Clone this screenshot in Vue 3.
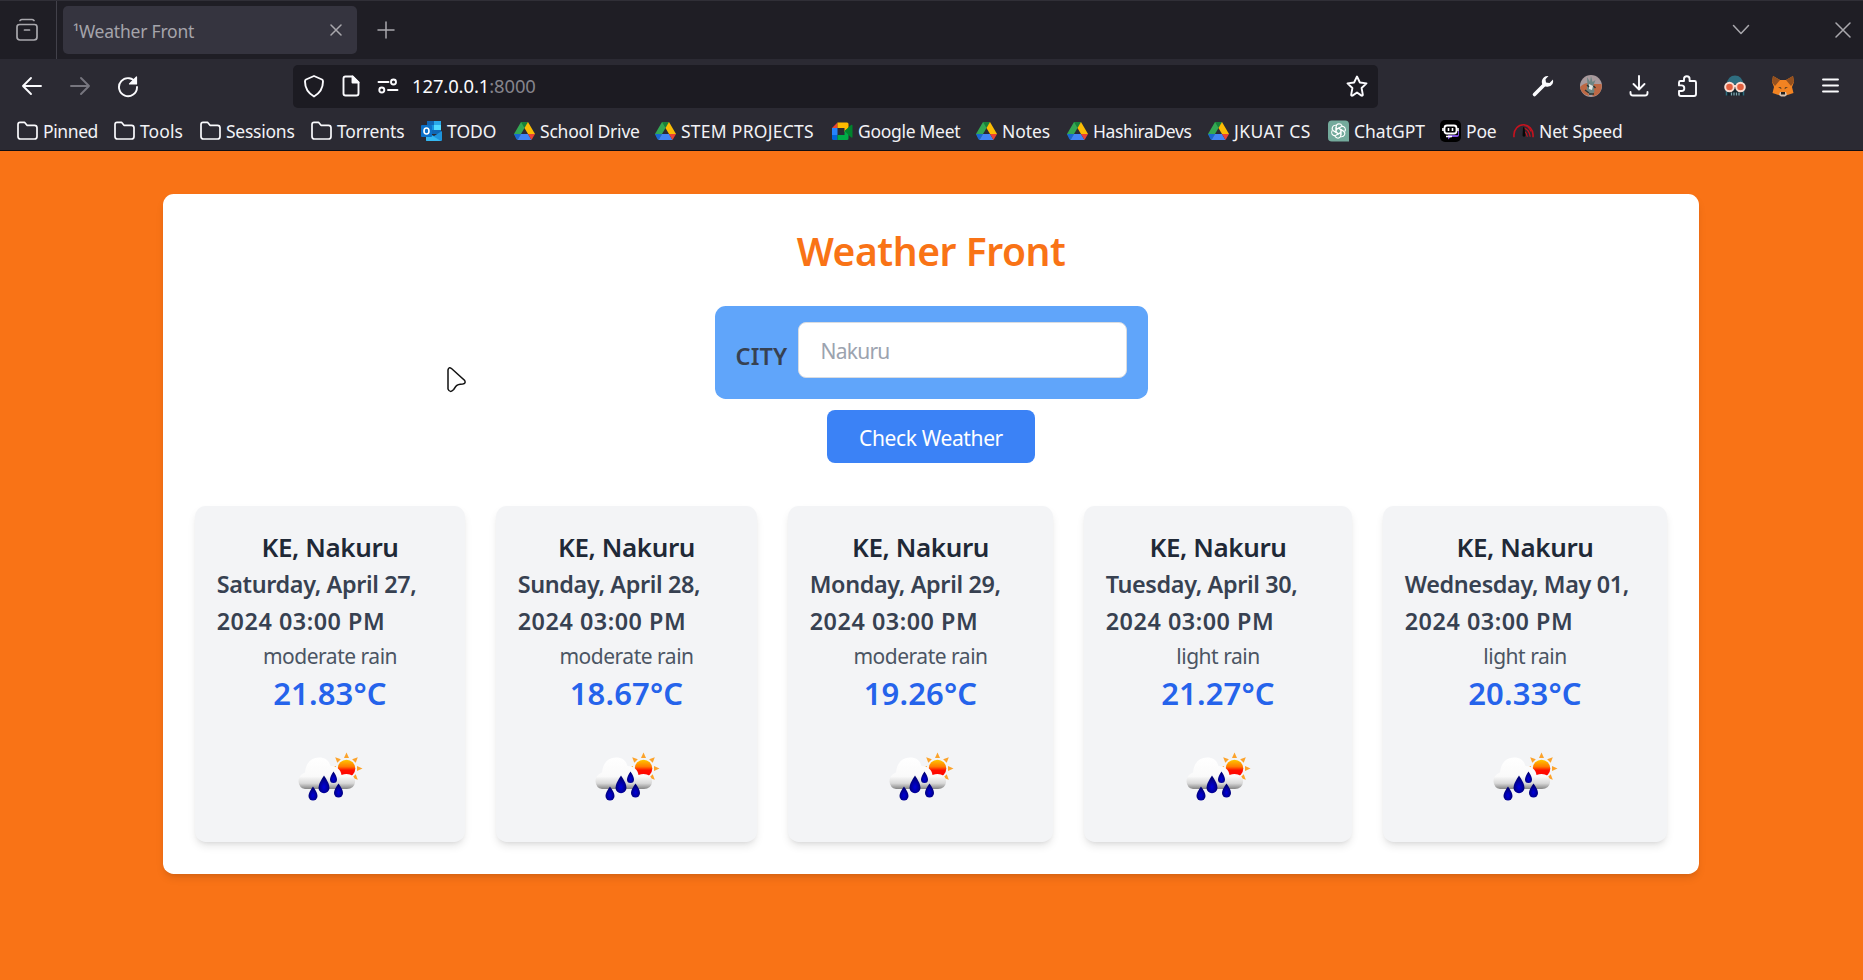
<script setup>
const bookmarks = [
  { icon: 'folder', label: 'Pinned', w: 54, ls: -0.4 },
  { icon: 'folder', label: 'Tools', w: 43, ls: 0.1 },
  { icon: 'folder', label: 'Sessions', w: 68, ls: -0.25 },
  { icon: 'folder', label: 'Torrents', w: 67, ls: -0.15 },
  { icon: 'outlook', label: 'TODO', w: 50, ls: 0 },
  { icon: 'drive', label: 'School Drive', w: 98, ls: -0.22 },
  { icon: 'drive', label: 'STEM PROJECTS', w: 134, ls: 0.26 },
  { icon: 'meet', label: 'Google Meet', w: 101, ls: -0.3 },
  { icon: 'drive', label: 'Notes', w: 48, ls: -0.1 },
  { icon: 'drive', label: 'HashiraDevs', w: 98, ls: -0.4 },
  { icon: 'drive', label: 'JKUAT CS', w: 77, ls: 0.45 },
  { icon: 'gpt', label: 'ChatGPT', w: 69, ls: 0 },
  { icon: 'poe', label: 'Poe', w: 30, ls: -0.2 },
  { icon: 'speed', label: 'Net Speed', w: 82, ls: -0.15 },
]
const forecasts = [
  { day: 'Saturday, April 27,', text: 'moderate rain', temp: '21.83°C', w: 270 },
  { day: 'Sunday, April 28,', text: 'moderate rain', temp: '18.67°C', w: 261 },
  { day: 'Monday, April 29,', text: 'moderate rain', temp: '19.26°C', w: 265 },
  { day: 'Tuesday, April 30,', text: 'light rain', temp: '21.27°C', w: 268 },
  { day: 'Wednesday, May 01,', text: 'light rain', temp: '20.33°C', w: 284 },
]
</script>

<template>
  <div class="window">
    <header class="chrome">
      <div class="tabs">
        <div class="view">
          <svg width="24" height="24" viewBox="0 0 24 24" class="ln dim"><path d="M5 2.500q1-1 2-1h10q1 0 2 1M4.500 6.500h15q2.500 0 2.500 2.500v10q0 3-3 3h-14q-3 0-3-3v-10q0-2.500 2.500-2.500zM9.500 12h5" /></svg>
        </div>
        <div class="tab">
          <span>¹Weather Front</span>
          <svg width="12" height="12" viewBox="0 0 12 12" class="ln thin"><path d="M1 1l10 10M11 1L1 11" /></svg>
        </div>
        <svg class="ln thin plus" width="18" height="18" viewBox="0 0 18 18"><path d="M9 1v16M1 9h16" /></svg>
        <i class="grow"></i>
        <svg class="ln thin" width="18" height="12" viewBox="0 0 18 12"><path d="M1.500 1.500l7.500 8 7.500-8" /></svg>
        <svg class="ln thin close" width="16" height="16" viewBox="0 0 16 16"><path d="M1 1l14 14M15 1L1 15" /></svg>
      </div>
      <div class="tools">
        <svg class="ln" width="22" height="22" viewBox="0 0 22 22"><path d="M20 11H2M10 3l-8 8 8 8" /></svg>
        <svg class="ln off" width="22" height="22" viewBox="0 0 22 22"><path d="M2 11h18M12 3l8 8-8 8" /></svg>
        <svg class="ln" width="24" height="24" viewBox="0 0 24 24"><path d="M20 9a9 9 0 1 0 1 4" /><path d="M20.500 3v7h-7z" fill="#fbfbfe" stroke-width="1.200" /></svg>
        <div class="url">
          <svg class="ln" width="22" height="24" viewBox="0 0 22 24"><path d="M11 2l8 3.500q1 .5 1 2c0 6-3 11.500-9 15-6-3.500-9-9-9-15q0-1.500 1-2z" /></svg>
          <svg class="ln" width="22" height="24" viewBox="0 0 22 24"><path d="M5.500 2.500h7l6 6v11q0 2-2 2h-11q-2 0-2-2v-15q0-2 2-2z" /><path d="M12.500 2.500v6h6z" fill="#fbfbfe" /></svg>
          <svg class="ln" width="22" height="20" viewBox="0 0 22 20"><path d="M1.500 6h10M11 14h9.500" /><circle cx="16.500" cy="6" r="2.500" /><circle cx="4.800" cy="14" r="2.500" /></svg>
          <span class="addr">127.0.0.1<b>:8000</b></span>
          <i class="grow"></i>
          <svg class="ln" width="24" height="24" viewBox="0 0 24 24"><path d="M12 2.500l2.900 6 6.600.9-4.900 4.600 1.200 6.700q0 1.300-1.300.9L12 18.500l-4.500 3.100q-1.400.4-1.300-.9L7.400 14 2.500 9.400l6.600-.9z" /></svg>
        </div>
        <div class="exts">
          <svg width="24" height="24" viewBox="0 0 24 24"><path d="M3.500 20.500L13 11" stroke="#fbfbfe" stroke-width="3.600" stroke-linecap="round" /><path d="M17.500 2a6 6 0 0 0-6.500 7.500 6 6 0 0 0 10.500.5q1-2 .5-4.500l-3.500 3.500-3.500-.5-.5-3.200z" fill="#fbfbfe" /></svg>
          <svg width="24" height="24" viewBox="0 0 24 24"><circle cx="12" cy="12" r="11" fill="#a99a9d" /><path d="M1 13q4-4 8-4l-1 5 2 8Q2 20 1 13zM14 10h8.500q1 4-2 9-4 4-7 3z" fill="#bd6844" /><path d="M8 3l3 5 1-6 1.500 6 3-2-2 5 1 7-4 3-4-4 1-6z" fill="#6c8583" /><path d="M10 10l4 2-1 4-3-1z" fill="#dfe5e1" /><path d="M6 16l4 3M10 20h5M14.500 12l2 2M8 11l2 2" stroke="#2a3432" stroke-width="1.400" /></svg>
          <svg class="ln" width="24" height="24" viewBox="0 0 24 24"><path d="M12 2v13M6.500 10L12 15.500 17.500 10M3.500 18v1q0 2.500 2.500 2.500h12q2.500 0 2.500-2.500v-1" /></svg>
          <svg class="ln" width="24" height="24" viewBox="0 0 24 24"><path d="M4 8.500q0-1.500 1.500-1.500H9V5a2.800 2.800 0 0 1 5.600 0v2h4.900q1.500 0 1.500 1.500V20q0 2-2 2H6q-2 0-2-2v-3h2.500a2.800 2.800 0 0 0 0-5.600H4z" /></svg>
          <svg width="24" height="24" viewBox="0 0 24 24"><path d="M3.500 10.500Q5 1.500 12 1.500t8.500 9z" fill="#2f6e80" /><path d="M3 11h18v10.500H3z" fill="#13232b" /><path d="M3.500 16v5.500M20.500 16v5.500" stroke="#2f6e80" stroke-width="1.500" /><path d="M8.500 18.500v3M11 18.500v3M13.500 18.500v3M16 18.500v3" stroke="#7fa5b0" stroke-width="1.300" /><path d="M10 12h4" stroke="#f6d5cb" stroke-width="2" /><circle cx="6.500" cy="13" r="4.300" fill="#e2603f" stroke="#fbdcd1" stroke-width="2" /><circle cx="17.500" cy="13" r="4.300" fill="#e2603f" stroke="#fbdcd1" stroke-width="2" /></svg>
          <svg width="24" height="24" viewBox="0 0 24 24"><path d="M2 2l7 4h6l7-4 1 6-2 5 1.500 6-6 2H7.500l-6-2L3 13 1 8z" fill="#f28322" /><path d="M2 2l7 4-5 6-3-4zM22 2l-7 4 5 6 3-4z" fill="#93501f" /><path d="M7 13l3 .3.5 2zM17 13l-3 .3-.5 2z" fill="#523a24" /><path d="M9 18h6l1 3-2 1.500h-4L8 21z" fill="#d8c0ad" /><path d="M10 18h4v2.500h-4z" fill="#222" /></svg>
          <svg class="ln" width="24" height="24" viewBox="0 0 24 24"><path d="M4 5.500h15M4 11.500h15M4 17.500h15" /></svg>
        </div>
      </div>
      <nav class="marks">
        <a v-for="b in bookmarks" :key="b.label">
          <svg v-if="b.icon === 'folder'" class="ln" width="21" height="22" viewBox="0 0 21 22"><path d="M1 4.500q0-2.200 2-2.200h4.500l2.500 3h7.500q2.500 0 2.500 2.500v8.700q0 2.500-2.500 2.500h-14q-2.500 0-2.500-2.500z" /></svg>
          <svg v-else-if="b.icon === 'outlook'" width="21" height="22" viewBox="0 0 21 22"><path d="M6 1h14v13H6z" fill="#1066b5" /><path d="M6 5h7v5H6z" fill="#1490df" /><path d="M13 1h7v5h-7z" fill="#28a8ea" /><path d="M13 5h7v5h-7z" fill="#50d9ff" /><path d="M5 12l8 4 8-5v9q0 1-1 1H6q-1 0-1-1z" fill="#1e94dd" /><path d="M5 12l15 9H6q-1 0-1-1z" fill="#35b8f1" /><rect x="0" y="5" width="11" height="12" rx="1" fill="#0c70c8" /><ellipse cx="5.500" cy="11" rx="2.500" ry="3" fill="none" stroke="#fff" stroke-width="1.600" /></svg>
          <svg v-else-if="b.icon === 'drive'" width="21" height="22" viewBox="0 0 21 22"><path d="M7 2h7l-7 12-3.500 6L0 14z" fill="#34a853" /><path d="M7 2h7l-3.500 6z" fill="#188038" /><path d="M14 2l7 12h-7L10.500 8z" fill="#fbbc04" /><path d="M0 14h7l-3.500 6q-.8-.3-1.300-1.200z" fill="#1967d2" /><path d="M7 14h7l3.500 6h-14z" fill="#4285f4" /><path d="M14 14h7l-3.500 6z" fill="#ea4335" /></svg>
          <svg v-else-if="b.icon === 'meet'" width="21" height="22" viewBox="0 0 21 22"><path d="M0 8l5.500-5.500V8z" fill="#ea4335" /><path d="M5.500 8h7v7h-7z" fill="#2b2a33" /><path d="M5.500 2.500H15q1.500 0 1.500 1.500v5l-4 3V8h-7z" fill="#ffba00" /><path d="M0 8h5.500v7H0z" fill="#2684fc" /><path d="M0 15h5.500v5h-4Q0 20 0 18.500z" fill="#0066da" /><path d="M5.500 15h7v-4l4-3v10.500q0 1.500-1.500 1.500H5.500z" fill="#00ac47" /><path d="M12.500 11l6.500-6q1.500-.8 1.500.7v11q0 1.500-1.500.6z" fill="#00832d" /></svg>
          <svg v-else-if="b.icon === 'gpt'" width="22" height="22" viewBox="0 0 22 22"><path d="M4 0h14q4 0 4 4v18H4q-4 0-4-4V4q0-4 4-4z" fill="#74aa9c" /><g fill="none" stroke="#fff" stroke-width="1.100"><path v-for="n in 6" :key="n" :transform="`rotate(${n * 60} 11 11)`" d="M8.500 12.500V6.700q0-3 3-3.200 2.300 0 3.300 2.200M8.500 9.500l4.800-2.800" /></g></svg>
          <svg v-else-if="b.icon === 'poe'" width="21" height="22" viewBox="0 0 21 22"><rect width="21" height="22" rx="5" fill="#000" /><path d="M8 15h10v-5l1 1v4q0 2-3 2h-5l-3 2.500z" fill="#7d50d8" /><rect x="4.500" y="5.500" width="12" height="8" rx="2.500" fill="none" stroke="#fff" stroke-width="1.800" /><path d="M3 8v3M18 8v3M8.500 8v3M12.500 8v3M6 16.500h6" stroke="#fff" stroke-width="1.600" /></svg>
          <svg v-else width="22" height="22" viewBox="0 0 22 22"><g fill="none" stroke="#c5131f"><path d="M1 17.500V15A10 10.500 0 0 1 21 15v2.500" stroke-width="1.700" /><path d="M11.500 8q5.500 1.500 6.500 9M12 11.500q2.500 1.500 3 5.500M12 5.500q4 0 7 6" stroke-width="1.300" /></g><path d="M10.500 7h1.500l1 9q-1.500 2-3 0z" fill="#080808" /></svg>
          <span :style="{ width: b.w + 'px', letterSpacing: b.ls + 'px' }">{{ b.label }}</span>
        </a>
      </nav>
    </header>

    <main>
      <section class="panel">
        <h1>Weather Front</h1>
        <form>
          <div class="field">
            <label for="city">CITY</label>
            <input id="city" placeholder="Nakuru" />
          </div>
          <button type="button">Check Weather</button>
        </form>
        <div class="cards">
          <article v-for="f in forecasts" :key="f.day" :style="{ width: f.w + 'px' }">
            <h2>KE, Nakuru</h2>
            <h3>{{ f.day }}<br /><span class="time">2024 03:00 PM</span></h3>
            <p class="desc">{{ f.text }}</p>
            <p class="temp">{{ f.temp }}</p>
            <svg class="weather" viewBox="0 0 85.300 85.300">
              <defs>
                <linearGradient id="sun" x1="0" y1="0" x2="0" y2="1"><stop offset="0" stop-color="#ffc800" /><stop offset=".4" stop-color="#ff7a00" /><stop offset=".6" stop-color="#ff0d00" /><stop offset="1" stop-color="#f00" /></linearGradient>
                <linearGradient id="cloud" x1="0" y1="0" x2="0" y2="1"><stop offset="0" stop-color="#fff" /><stop offset=".6" stop-color="#fafafa" /><stop offset=".82" stop-color="#d8d8d8" /><stop offset="1" stop-color="#858585" /></linearGradient>
                <radialGradient id="drop" cx=".5" cy=".65" r=".5"><stop offset="0" stop-color="#0000dc" /><stop offset="1" stop-color="#000078" /></radialGradient>
              </defs>
              <path v-for="n in 8" :key="n" :transform="`rotate(${n * 45} 59.500 33.500)`" d="M57 23l2.500-5.500 2.500 5.500z" fill="#fca32b" />
              <circle cx="59.500" cy="33.500" r="8.800" fill="url(#sun)" />
              <path d="M18 54q-6-1-6.500-7.500C11.500 41 15 39 18 37.500 19 28 23.500 23 32 22.500c7 0 10 3.500 11.500 8.500C50 31 54 35 54.500 40 62 37 69 41 68 47.500q-1 6.500-8 6.500z" fill="url(#cloud)" />
              <g fill="url(#drop)">
                <path d="M37 40.500q5.500 8 5.500 12.200a5.500 5.500 0 0 1-11 0q0-4.200 5.500-12.200z" />
                <path d="M46.500 36.500q3.500 5 3.500 8a3.500 3.500 0 0 1-7 0q0-3 3.500-8z" />
                <path d="M26 51.500q4.500 6 4.500 9.500a4.500 4.500 0 0 1-9 0q0-3.500 4.500-9.500z" />
                <path d="M51.500 48.500q4.500 6 4.500 9.500a4.500 4.500 0 0 1-9 0q0-3.500 4.500-9.500z" />
              </g>
            </svg>
          </article>
        </div>
      </section>
    </main>

    <svg class="cursor" width="22" height="28" viewBox="0 0 22 28"><path d="M2 4q.6-3.500 3.500-1.500L18.700 14.500q1.500 3-2 3.500-5 0-7 2.500l-2 3q-3.700 4-5.700-.5z" fill="#fff" stroke="#111" stroke-width="1.500" /></svg>
  </div>
</template>

<style>
html, body { margin: 0; background: #f97316; overflow: hidden; }
</style>

<style scoped>
* { box-sizing: border-box; }
.window { height: 980px; background: #f97316; font-family: "Noto Sans", sans-serif; overflow: hidden; }
svg { display: block; flex: none; }
.ln { fill: none; stroke: #fbfbfe; stroke-width: 1.900; stroke-linejoin: round; stroke-linecap: round; }
.thin { stroke: #a9a8ad; stroke-width: 1.500; }
.dim { stroke: #a9a8ad; stroke-width: 1.700; }
.off { stroke: #77767f; }
.grow { flex: 1; }
.chrome { height: 151px; background: #2b2a33; border-bottom: 1px solid #0e0e13; }
.tabs { height: 59px; background: #1f1e25; border-top: 1px solid #302f37; display: flex; align-items: center; padding-right: 12px; }
.view { width: 57px; height: 58px; border-right: 1px solid #42414a; display: flex; align-items: center; padding-left: 15px; }
.tab { width: 294px; height: 48px; margin-left: 6px; border-radius: 5px; background: #35343f; color: #a5a4ab; display: flex; align-items: center; justify-content: space-between; padding: 0 15px 0 10px; font-size: 17.500px; }
.tab span { letter-spacing: -.22px; padding-top: 1px; }
.plus { margin-left: 20px; }
.close { margin-left: 85px; }
.tools { height: 54px; display: flex; align-items: center; padding-left: 21px; }
.tools > svg + svg { margin-left: 26px; }
.tools > svg + svg + svg { margin-left: 25px; }
.url { width: 1085px; height: 43px; margin-left: 153px; border-radius: 5px; background: #1c1b22; display: flex; align-items: center; padding: 0 9px 0 10px; }
.url svg + svg { margin-left: 15px; }
.addr { margin-left: 13px; font-size: 18.400px; letter-spacing: -.08px; color: #fbfbfe; white-space: nowrap; line-height: 24px; padding-bottom: 1px; }
.addr b { font-weight: 400; color: #85848c; }
.exts { display: flex; gap: 24px; margin-left: 153px; }
.marks { display: flex; align-items: center; height: 36px; gap: 17px; padding-left: 17px; }
.marks a { display: flex; align-items: center; gap: 5px; color: #f2f2f6; font-size: 17.500px; line-height: 24px; white-space: nowrap; }
.marks svg { width: 21px; }
.marks .ln { stroke-width: 1.700; }
main { padding: 43px 0 0 163px; }
.panel { width: 1536px; height: 680px; background: #fff; border-radius: 10.700px; padding: 32px; box-shadow: 0 5px 8px -1px rgba(0,0,0,.1), 0 3px 5px -3px rgba(0,0,0,.1); }
h1, h2, h3, p { margin: 0; }
h1 { text-align: center; color: #f97316; font-size: 39px; line-height: 48px; font-weight: 600; letter-spacing: -.45px; margin-bottom: 32px; padding-top: 1px; height: 48px; }
form { display: flex; flex-direction: column; align-items: center; }
.field { width: 433px; height: 93px; background: #60a5fa; border-radius: 10.700px; display: flex; align-items: flex-start; padding: 16px 21px; justify-content: space-between; }
label { color: #374151; font-weight: 600; font-size: 23.500px; letter-spacing: .15px; line-height: 37px; margin-top: 16px; }
input { width: 329px; height: 56px; border: 1px solid #d9dce1; border-radius: 8px; font: 21px "Noto Sans", sans-serif; letter-spacing: -.75px; padding: 2px 22px 0; background: #fff; outline: none; }
input::placeholder { color: #9ca3af; opacity: 1; }
button { width: 208px; height: 53px; margin-top: 11px; border: 0; border-radius: 8px; background: #3b82f6; color: #fff; font: 21px "Noto Sans", sans-serif; letter-spacing: -.37px; padding: 2px 0 0; }
.cards { display: flex; gap: 31px; margin-top: 43px; }
article { height: 336px; border-radius: 10.700px; background: #f3f4f6; padding: 22.500px 21.700px 20px; box-shadow: 0 5px 8px -1px rgba(0,0,0,.1), 0 3px 5px -3px rgba(0,0,0,.1); display: flex; flex-direction: column; align-items: center; white-space: nowrap; }
h2 { font-size: 26px; line-height: 37.300px; font-weight: 600; letter-spacing: -.4px; color: #1f2937; }
h3 { align-self: stretch; font-size: 23.400px; line-height: 37.300px; font-weight: 600; letter-spacing: -.36px; color: #374151; }
.time { letter-spacing: .52px; }
.desc { font-size: 21px; line-height: 32px; letter-spacing: -.48px; color: #4b5563; }
.temp { font-size: 31px; line-height: 42.700px; font-weight: 600; letter-spacing: .15px; color: #2563eb; }
.weather { width: 85.300px; height: 85.300px; margin-top: 20px; }
.cursor { position: absolute; left: 446px; top: 366px; }
</style>
